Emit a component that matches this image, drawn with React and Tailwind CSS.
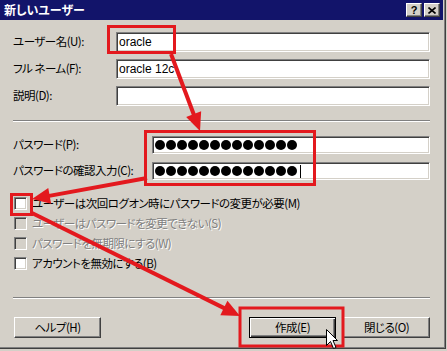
import React from "react";

const RED = "#e3191e";

function arrowHead(x1, y1, x2, y2, len = 18, hw = 8) {
  const dx = x2 - x1, dy = y2 - y1;
  const l = Math.hypot(dx, dy);
  const ux = dx / l, uy = dy / l;
  const nx = -uy, ny = ux;
  const bx = x2 - ux * len, by = y2 - uy * len;
  return {
    line: [x1, y1, bx + ux * 2, by + uy * 2],
    pts: `${x2},${y2} ${bx + nx * hw},${by + ny * hw} ${bx - nx * hw},${by - ny * hw}`,
  };
}

function Arrow({ x1, y1, x2, y2 }) {
  const a = arrowHead(x1, y1, x2, y2);
  return (
    <g>
      <line x1={a.line[0]} y1={a.line[1]} x2={a.line[2]} y2={a.line[3]} stroke={RED} strokeWidth="4" />
      <polygon points={a.pts} fill={RED} />
    </g>
  );
}

const sunken =
  "border border-t-[#808080] border-l-[#808080] border-b-white border-r-white shadow-[inset_1px_1px_0_#404040,inset_-1px_-1px_0_#d4d0c8]";
const raised =
  "border border-t-white border-l-white border-b-[#404040] border-r-[#404040] shadow-[inset_-1px_-1px_0_#808080]";

function Input({ value }) {
  return (
    <div className={`flex-1 h-full bg-white ${sunken} flex items-center pl-[2px] font-['Liberation_Sans',sans-serif] font-normal tracking-normal text-[12px]`}>
      {value}
    </div>
  );
}

function Dots({ caret }) {
  return (
    <div className={`flex-1 h-full bg-white ${sunken} flex items-center pl-[2px] gap-[1px]`}>
      {Array.from({ length: 13 }).map((_, i) => (
        <span key={i} className="w-[10px] h-[10px] rounded-full bg-black" />
      ))}
      {caret && <span className="ml-[2px] w-[1px] h-[13px] bg-black" />}
    </div>
  );
}

function Check({ label, disabled }) {
  return (
    <div className="flex items-center h-[13px] gap-[5px] ml-[1px]">
      <span className={`shrink-0 w-[13px] h-[13px] ${disabled ? "bg-[#d4d0c8]" : "bg-white"} ${sunken}`} />
      <span
        className={
          disabled ? "text-[#808080] [text-shadow:1px_1px_0_#fff]" : "text-black"
        }
      >
        {label}
      </span>
    </div>
  );
}

function Button({ children, def }) {
  return (
    <div
      className={`w-[87px] h-[21px] flex items-center justify-center bg-[#d4d0c8] ${
        def
          ? "border border-black shadow-[inset_1px_1px_0_#fff,inset_-1px_-1px_0_#404040,inset_-2px_-2px_0_#808080]"
          : raised
      }`}
    >
      {children}
    </div>
  );
}

export default function App() {
  return (
    <div className="relative w-[447px] h-[351px] bg-[#d4d0c8] overflow-hidden font-['Noto_Sans_CJK_JP',sans-serif] font-normal text-[11.5px] tracking-[-0.5px] leading-none text-black [font-feature-settings:'palt']">
      <div className="w-[446px] h-[349px] pr-[2px] border-r border-b border-[#404040] shadow-[inset_-1px_-1px_0_#808080]">
        {/* title bar */}
        <div className="w-[443px] h-[20px] bg-[#12146a] flex items-center justify-between pl-[4px] pr-[3px]">
          <span className="text-white font-bold text-[12px] tracking-normal">新しいユーザー</span>
          <div className="flex gap-[2px]">
            <div className={`w-[16px] h-[14px] bg-[#d4d0c8] ${raised} flex items-center justify-center font-['Liberation_Sans',sans-serif] font-bold tracking-normal text-[11px]`}>
              ?
            </div>
            <div className={`w-[16px] h-[14px] bg-[#d4d0c8] ${raised} flex items-center justify-center`}>
              <svg width="8" height="7" viewBox="0 0 8 7">
                <path d="M0.5 0.5 L7.5 6.5 M7.5 0.5 L0.5 6.5" stroke="black" strokeWidth="1.6" />
              </svg>
            </div>
          </div>
        </div>

        {/* content */}
        <div className="px-[13px] pt-[12px] flex flex-col">
          <div className="flex flex-col gap-[7px]">
            <div className="flex items-center h-[20px]">
              <span className="w-[103px]">ユーザー名(U):</span>
              <Input value="oracle" />
            </div>
            <div className="flex items-center h-[20px]">
              <span className="w-[103px]">フル ネーム(F):</span>
              <Input value="oracle 12c" />
            </div>
            <div className="flex items-center h-[20px]">
              <span className="w-[103px]">説明(D):</span>
              <Input value="" />
            </div>
          </div>

          <div className="mt-[14px] h-[2px] border-t border-t-[#808080] border-b border-b-white" />

          <div className="mt-[14px] flex flex-col gap-[8px]">
            <div className="flex items-center h-[18px]">
              <span className="w-[139px]">パスワード(P):</span>
              <Dots />
            </div>
            <div className="flex items-center h-[18px]">
              <span className="w-[139px]">パスワードの確認入力(C):</span>
              <Dots caret />
            </div>
          </div>

          <div className="mt-[17px] flex flex-col gap-[7px]">
            <Check label="ユーザーは次回ログオン時にパスワードの変更が必要(M)" />
            <Check label="ユーザーはパスワードを変更できない(S)" disabled />
            <Check label="パスワードを無期限にする(W)" disabled />
            <Check label="アカウントを無効にする(B)" />
          </div>

          <div className="mt-[27px] h-[2px] border-t border-t-[#808080] border-b border-b-white" />

          <div className="mt-[18px] flex items-center">
            <div className="ml-[1px]">
              <Button>ヘルプ(H)</Button>
            </div>
            <div className="ml-auto flex gap-[7px]">
              <Button def>作成(E)</Button>
              <Button>閉じる(O)</Button>
            </div>
          </div>
        </div>
      </div>

      {/* annotations overlay */}
      <svg className="absolute inset-0 pointer-events-none" width="447" height="351" viewBox="0 0 447 351">
        <rect x="108.5" y="26.5" width="66" height="26" fill="none" stroke={RED} strokeWidth="3" />
        <rect x="145.5" y="131.5" width="169" height="53" fill="none" stroke={RED} strokeWidth="3" />
        <rect x="11.5" y="194.5" width="20" height="20" fill="none" stroke={RED} strokeWidth="3" />
        <rect x="240" y="308" width="103" height="38" fill="none" stroke={RED} strokeWidth="3" />
        <Arrow x1={171} y1={54} x2={200} y2={131} />
        <Arrow x1={147} y1={178} x2={32} y2={199} />
        <Arrow x1={32} y1={213} x2={240} y2={316} />
        <g transform="translate(326.5 329.5)">
          <path d="M0 0 L0 16 L4 12 L7 19 L9.5 18 L6.5 11 L11 11 Z" fill="white" stroke="black" strokeWidth="1" strokeLinejoin="miter" />
        </g>
      </svg>
    </div>
  );
}
